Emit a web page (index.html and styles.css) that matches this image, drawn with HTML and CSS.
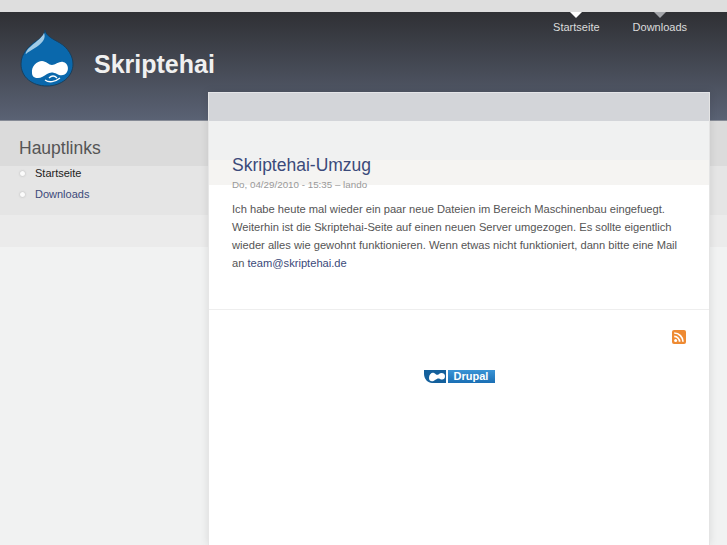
FILE: index.html
```html
<!DOCTYPE html>
<html>
	<head>
		<meta charset="utf-8" />
		<meta name="viewport" content="width=device-width, initial-scale=1">
		<title>Skriptehai</title>
		<link rel="stylesheet" href="styles.css">
	</head>
	<body>

		<div class="topstrip"></div>

		<div class="header">
			<svg class="logo" width="54" height="60" viewBox="0 0 54 60">
				<path d="M25 2 C26 8 33 11 40 15 C48 20 53 28 53 36 C53 49 41 58 27 58 C12 58 1 49 1 36 C1 25 9 18 16 13 C21 10 24 7 25 2 Z" fill="#0a68ac" stroke="#1a3f5c" stroke-width="1" />
				<path d="M24 5 C22 10 14 15 9 20 C6 23 5 26 6 26 C10 22 19 19 23 13 C25 10 25 7 24 5 Z" fill="#a0cbe6" />
				<path d="M12 45 C11 38 17 33 22 33 C26 33 29 37 32 37 C35 37 40 33 43 34 C48 35 49 41 47 44 C45 48 40 48 37 46 C33 44 30 44 27 46 C24 48 21 50 18 50 C14 50 12 48 12 45 Z" fill="#fff" />
				<path d="M25 52 C29 55 35 54 40 50 M29 50 C32 47 35 48 37 50" fill="none" stroke="#fff" stroke-width="1.3" />
			</svg>
			<a class="site-name" href="#">Skriptehai</a>
			<ul class="nav">
				<li class="active"><a href="#">Startseite</a></li>
				<li><a href="#">Downloads</a></li>
			</ul>
		</div>

		<div class="wrapper">
			<div class="sidebar">
				<h2>Hauptlinks</h2>
				<ul>
					<li class="active"><a href="#">Startseite</a></li>
					<li><a href="#">Downloads</a></li>
				</ul>
			</div>

			<div class="card">
				<div class="post">
					<h1><a href="#">Skriptehai-Umzug</a></h1>
					<div class="meta">Do, 04/29/2010 - 15:35 – lando</div>
					<p>Ich habe heute mal wieder ein paar neue Dateien im Bereich Maschinenbau eingefuegt. Weiterhin ist die Skriptehai-Seite auf einen neuen Server umgezogen. Es sollte eigentlich wieder alles wie gewohnt funktionieren. Wenn etwas nicht funktioniert, dann bitte eine Mail an <a href="#">team@skriptehai.de</a></p>
				</div>
				<div class="feed">
					<svg width="14" height="14" viewBox="0 0 14 14">
						<rect width="14" height="14" rx="2" fill="#ee8a32" />
						<circle cx="3.6" cy="10.4" r="1.5" fill="#fff" />
						<path d="M2.2 6.4 A5.4 5.4 0 0 1 7.6 11.8 M2.2 3 A8.8 8.8 0 0 1 11 11.8" fill="none" stroke="#fff" stroke-width="1.7" />
					</svg>
				</div>
				<div class="powered">
					<div class="badge">
						<svg width="22" height="13" viewBox="0 0 22 13">
							<path d="M0 0 H22 V13 H8 C4 13 0 9 0 4 Z" fill="#14609c" />
							<path d="M5 8 C5 4 8 2 10 3 C12 4 13 6 15 4 C17 2 21 3 21 6 C21 10 18 10 16 9 C14 8 13 9 11 10 C9 12 5 12 5 8 Z" fill="#fff" />
						</svg>
						<span>Drupal</span>
					</div>
				</div>
			</div>
		</div>

	</body>
</html>
```

FILE: styles.css
```css
html,
body {
	height: 100%;
}

body {
	margin: 0;
	padding: 0;
	display: flex;
	flex-direction: column;
	overflow: hidden;
	font-family: "Liberation Sans", Arial, sans-serif;
	font-size: 11.15px;
	color: #555;
	background-color: #f1f2f2;
}

ul,
li {
	list-style: none;
	margin: 0;
	padding: 0;
}

a {
	color: #3b4a7a;
	text-decoration: none;
}

.topstrip {
	height: 12px;
	flex: none;
	background-color: #dedede;
}

.header {
	height: 109px;
	flex: none;
	box-sizing: border-box;
	display: flex;
	padding-left: 20px;
	padding-right: 40px;
	background: linear-gradient(#2f3034, #5a6274);
	border-bottom: 1px solid #868b96;
}

.logo {
	margin-top: 16px;
}

.site-name {
	margin-left: 20px;
	margin-top: 37px;
	font-size: 25px;
	line-height: 30px;
	font-weight: bold;
	color: #f0f0f0;
}

.nav {
	margin-left: auto;
	display: flex;
	gap: 33px;
	align-self: flex-start;
}

.nav li {
	display: flex;
	flex-direction: column;
	align-items: center;
}

.nav li::before {
	content: "";
	border-left: 6px solid transparent;
	border-right: 6px solid transparent;
	border-top: 6px solid #a4a6aa;
}

.nav li.active::before {
	border-top-color: #fff;
}

.nav a {
	color: #dcdcdc;
	font-size: 11px;
	line-height: 18px;
}

.wrapper {
	flex: 1;
	display: flex;
	background: linear-gradient(#dbdbdb 45px, #e5e5e5 45px 94px, #ebebeb 94px 126px, #f1f2f2 126px);
}

.sidebar {
	width: 208px;
	flex: none;
	box-sizing: border-box;
	padding-left: 19px;
}

.sidebar h2 {
	margin: 16px 0 4px;
	font-size: 17.5px;
	line-height: 22px;
	font-weight: normal;
	color: #555;
}

.sidebar li {
	position: relative;
	padding-left: 16px;
	font-size: 11px;
	line-height: 21px;
}

.sidebar li::before {
	content: "";
	position: absolute;
	left: 1px;
	top: 8px;
	width: 5px;
	height: 5px;
	border-radius: 50%;
	background-color: #fbfbfb;
	box-shadow: 0 0 2px #aaa;
}

.sidebar li.active a {
	color: #222;
}

.card {
	width: 502px;
	flex: none;
	box-sizing: border-box;
	margin-top: -29px;
	border-top: 1px solid #e4e5e8;
	border-left: 1px solid #e6e6e6;
	border-right: 1px solid #e4e4e4;
	background: linear-gradient(#d3d5d9 28px, #f0f1f1 28px 67px, #f5f4f2 67px 92px, #fff 92px);
	box-shadow: 0 0 8px rgba(0, 0, 0, 0.1);
}

.post {
	box-sizing: content-box;
	height: 155px;
	padding: 61px 23px 0;
	border-bottom: 1px solid #eee;
}

.post h1 {
	margin: 0;
	font-size: 17.5px;
	line-height: 22px;
	font-weight: normal;
}

.meta {
	margin-top: 2px;
	font-size: 9.8px;
	line-height: 14px;
	color: #999;
}

.post p {
	margin: 8px 0 0;
	line-height: 18px;
}

.feed {
	display: flex;
	justify-content: flex-end;
	padding: 20px 23px 0;
}

.powered {
	display: flex;
	justify-content: center;
	margin-top: 26px;
}

.badge {
	display: flex;
	gap: 2px;
}

.badge span {
	width: 47px;
	height: 13px;
	font-size: 11px;
	line-height: 13px;
	font-weight: bold;
	text-align: center;
	color: #fff;
	background: linear-gradient(#3a94d6, #1a6fb4);
}
```
